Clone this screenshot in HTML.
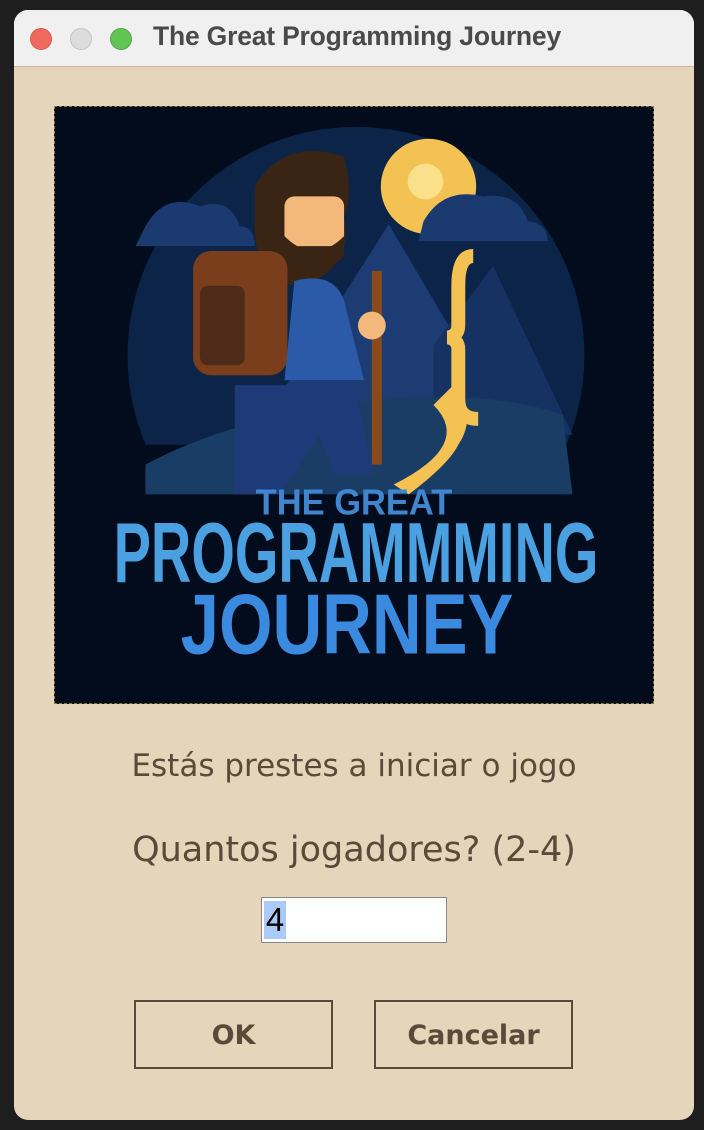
<!DOCTYPE html>
<html><head><meta charset="utf-8"><style>
html,body{margin:0;padding:0;width:704px;height:1130px;background:#1e1e1e;overflow:hidden}
.win{position:absolute;left:14px;top:10px;width:680px;height:1110px;border-radius:14px;background:#e4d5bb;overflow:hidden}
.tb{position:absolute;left:0;top:0;width:680px;height:56px;background:#f0f0f0;border-bottom:1px solid #c9b99c}
.dot{position:absolute;top:18px;width:22px;height:22px;border-radius:50%}
.title{position:absolute;left:139px;top:11px;font:bold 26.5px "Liberation Sans",sans-serif;color:#4a4a4a;letter-spacing:-0.2px}
.img{position:absolute;left:40px;top:96px;width:598px;height:596px;border:1px dashed #8a7a30;background:#020c1c}
.t1{position:absolute;left:0;width:680px;text-align:center;top:738px;font:31px "DejaVu Sans",sans-serif;color:#5a4a3a}
.t2{position:absolute;left:0;width:680px;text-align:center;top:820px;font:35px "DejaVu Sans",sans-serif;color:#5a4a3a}
.inp{position:absolute;left:247px;top:887px;width:186px;height:46px;background:#fff;border:1px solid #888;box-sizing:border-box}
.sel{position:absolute;left:2px;top:3px;height:38px;width:22px;background:#aacbf7;font:33px "Liberation Sans",sans-serif;color:#000;line-height:38px;text-align:center}
.btn{position:absolute;top:990px;width:199px;height:69px;box-sizing:border-box;border:2px solid #5a4a3a;font:bold 27px "DejaVu Sans",sans-serif;color:#5a4a3a;text-align:center;line-height:68px}
</style></head><body>
<div class="win">
<div class="tb">
<div class="dot" style="left:16px;background:#ee6a5e;border:1px solid #d45a4f;box-sizing:border-box"></div>
<div class="dot" style="left:56px;background:#dcdcdc;border:1px solid #c4c4c4;box-sizing:border-box"></div>
<div class="dot" style="left:96px;background:#61c554;border:1px solid #52a947;box-sizing:border-box"></div>
<div class="title">The Great Programming Journey</div>
</div>
<div class="img">
<svg width="598" height="596" viewBox="0 0 600 600">
<circle cx="302" cy="250" r="230" fill="#0c2448"/>
<rect x="60" y="340" width="500" height="260" fill="#020c1c"/>
<circle cx="375" cy="80" r="48" fill="#f4c153"/>
<circle cx="372" cy="75" r="18" fill="#fbe08c"/>
<polygon points="200,330 335,118 460,330" fill="#1d3c74"/>
<polygon points="380,240 440,160 520,330 380,330" fill="#163262"/>
<path d="M90,360 C200,300 400,270 510,310 L520,390 L90,390Z" fill="#1a3d66"/>
<path d="M90,120 q20,-35 55,-20 q30,-10 40,20 q15,0 15,20 h-120z" fill="#1a3a70"/>
<path d="M370,115 q20,-35 60,-25 q35,-5 45,25 q20,2 20,20 h-130z" fill="#1a3a70"/>
<path d="M340,380 q40,-20 50,-40 q10,-20 -10,-40 l20,-20 q25,30 5,60 q-10,20 -50,50z" fill="#f4c153"/>
<path d="M420,150 q-15,0 -15,30 v40 q0,10 -10,12 q10,2 10,12 v50 q0,20 20,20" stroke="#f4c153" stroke-width="14" fill="none"/>
<path d="M200,80 q30,-50 90,-30 q10,40 0,60 q10,50 -40,70 q-50,0 -50,-60z" fill="#3a2414"/>
<rect x="230" y="90" width="60" height="50" rx="10" fill="#f3b97c"/>
<path d="M230,130 q30,30 60,0 v20 q-30,30 -60,0z" fill="#3a2414"/>
<rect x="138" y="145" width="95" height="125" rx="18" fill="#7a3e1c"/>
<rect x="145" y="180" width="45" height="80" rx="8" fill="#4e2a18"/>
<path d="M240,175 q40,-10 50,20 l20,80 h-80z" fill="#2a5aa8"/>
<path d="M180,280 h120 l20,90 h-40 l-15,-40 l-40,60 h-45z" fill="#1e3a78"/>
<rect x="318" y="165" width="10" height="195" fill="#8a4a1c"/>
<circle cx="318" cy="220" r="14" fill="#f3b97c"/>
<text x="300" y="410" text-anchor="middle" font-family="Liberation Sans,sans-serif" font-weight="bold" font-size="36" fill="#3f86cf" textLength="198" lengthAdjust="spacingAndGlyphs">THE GREAT</text>
<text x="302" y="478" text-anchor="middle" font-family="Liberation Sans,sans-serif" font-weight="bold" font-size="86" fill="#4aa0e0" textLength="488" lengthAdjust="spacingAndGlyphs">PROGRAMMMING</text>
<text x="293" y="550" text-anchor="middle" font-family="Liberation Sans,sans-serif" font-weight="bold" font-size="86" fill="#3a8ae0" textLength="335" lengthAdjust="spacingAndGlyphs">JOURNEY</text>
</svg>
</div>
<div class="t1">Estás prestes a iniciar o jogo</div>
<div class="t2">Quantos jogadores? (2-4)</div>
<div class="inp"><div class="sel">4</div></div>
<div class="btn" style="left:120px">OK</div>
<div class="btn" style="left:360px">Cancelar</div>
</div>
</body></html>
